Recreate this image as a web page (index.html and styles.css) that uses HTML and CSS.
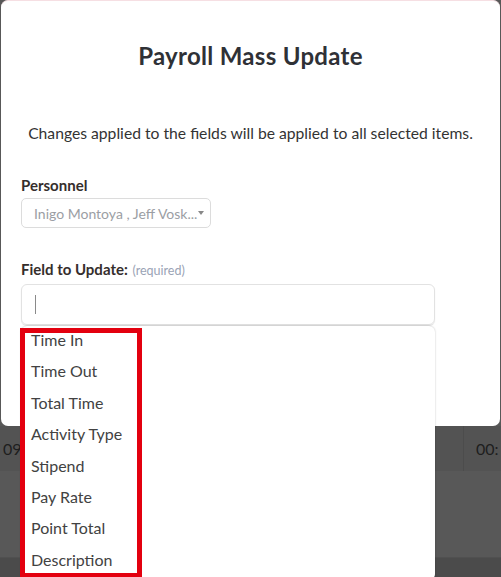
FILE: index.html
```html
<!DOCTYPE html>
<html>
<head>
<meta charset="utf-8">
<link rel="stylesheet" href="styles.css">
</head>
<body>
<div class="page">
  <div class="modal">
    <h2 class="title">Payroll Mass Update</h2>
    <p class="subtitle">Changes applied to the fields will be applied to all selected items.</p>
    <div class="field">
      <div class="label">Personnel</div>
      <div class="select">
        <span class="select-text">Inigo Montoya , Jeff Vosk...</span>
        <span class="caret"></span>
      </div>
    </div>
    <div class="field field-update">
      <div class="label">Field to Update: <span class="req">(required)</span></div>
      <div class="input-wrap">
        <div class="input"><span class="cursor"></span></div>
        <ul class="menu">
          <li>Time In</li>
          <li>Time Out</li>
          <li>Total Time</li>
          <li>Activity Type</li>
          <li>Stipend</li>
          <li>Pay Rate</li>
          <li>Point Total</li>
          <li>Description</li>
        </ul>
      </div>
    </div>
  </div>
  <div class="table-row">
    <div class="cell cell-left">09</div>
    <div class="cell cell-right">00:</div>
  </div>
  <div class="filler"></div>
  <div class="footer"></div>
</div>
<div class="annotation"></div>
</body>
</html>
```
FILE: styles.css
```css
* { box-sizing: border-box; }
html, body { margin: 0; padding: 0; }
body {
  width: 501px;
  height: 577px;
  overflow: hidden;
  background: #585858;
  font-family: "Lato", "Noto Sans", sans-serif;
  position: relative;
}
.page {
  display: flex;
  flex-direction: column;
  height: 577px;
}
.modal {
  margin: 0 1px 0 1px;
  height: 426px;
  background: #fff;
  border-top: 1px solid #f6dfe3;
  border-radius: 7px;
  padding: 40px 20px 0 20px;
  display: flex;
  flex-direction: column;
}
.title {
  margin: 0;
  font-size: 24px;
  line-height: 30px;
  font-weight: 700;
  color: #2f3136;
  text-align: center;
  letter-spacing: 0.3px;
}
.subtitle {
  margin: 52px 0 0 0;
  font-size: 15.7px;
  line-height: 20px;
  color: #333;
  text-align: center;
  white-space: nowrap;
}
.field { display: flex; flex-direction: column; }
.field:first-of-type { margin-top: 33px; }
.label {
  font-size: 15px;
  font-weight: 700;
  line-height: 18px;
  color: #352e2c;
}
.field .label { margin-bottom: 4px; }
.select {
  width: 190px;
  height: 30px;
  border: 1px solid #dcdcdc;
  border-radius: 5px;
  display: flex;
  align-items: center;
  padding: 0 0 0 12px;
  gap: 1px;
}
.select-text {
  font-size: 14px;
  color: #9b9ea4;
  white-space: nowrap;
}
.caret {
  width: 0;
  height: 0;
  border-left: 3px solid transparent;
  border-right: 3px solid transparent;
  border-top: 4px solid #888;
}
.field-update { margin-top: 32px; }
.req {
  font-size: 12.5px;
  font-weight: 400;
  color: #9aa3b5;
  margin-left: 1px;
}
.input-wrap { position: relative; width: 414px; }
.input {
  height: 41px;
  border: 1px solid #e2e2e2;
  border-radius: 6px;
  box-shadow: 0 1px 1px rgba(0,0,0,0.12);
  display: flex;
  align-items: center;
  padding-left: 13px;
}
.cursor {
  width: 1px;
  height: 19px;
  background: #8a8a8a;
}
.menu {
  position: absolute;
  left: 0;
  top: 42px;
  width: 414px;
  height: 254px;
  margin: 0;
  padding: 0;
  list-style: none;
  background: #fff;
  border-radius: 6px;
  box-shadow: 0 0 2px rgba(0,0,0,0.25);
  z-index: 5;
}
.menu li {
  height: 31.4px;
  line-height: 27px;
  padding-left: 10px;
  font-size: 16px;
  color: #424242;
}
.table-row {
  height: 45px;
  background: #535353;
  display: flex;
  align-items: center;
  font-size: 16px;
  color: #1e1e1e;
}
.cell-left { padding-left: 3px; width: 463px; }
.cell-right {
  flex: 1;
  height: 100%;
  border-left: 1px solid #4c4c4c;
  display: flex;
  align-items: center;
  padding-left: 12px;
}
.filler { height: 86px; background: #585858; }
.footer { flex: 1; background: #4b4b4b; border-top: 1px solid #505050; }
.annotation {
  position: absolute;
  left: 20px;
  top: 328px;
  width: 122px;
  height: 250px;
  border: 5px solid #e3000f;
  z-index: 10;
}
```
